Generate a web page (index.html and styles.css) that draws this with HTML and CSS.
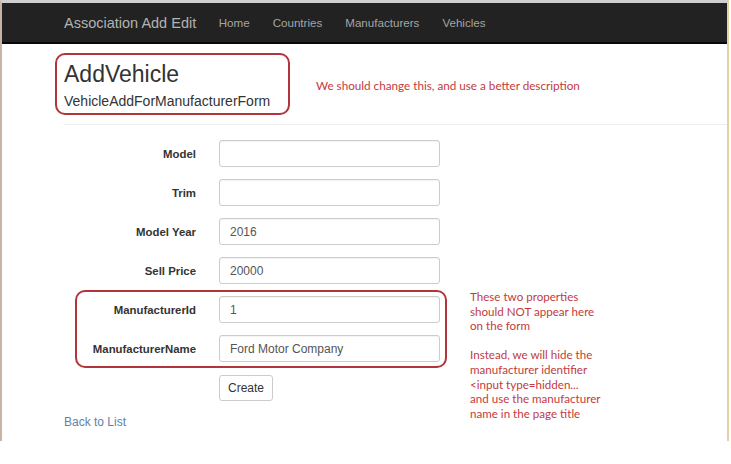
FILE: index.html
```html
<!DOCTYPE html>
<html>
<head>
<meta charset="utf-8">
<link rel="stylesheet" href="styles.css">
</head>
<body>
<div class="frame">
  <nav class="navbar">
    <span class="brand">Association Add Edit</span>
    <a class="nav-link">Home</a>
    <a class="nav-link">Countries</a>
    <a class="nav-link">Manufacturers</a>
    <a class="nav-link">Vehicles</a>
  </nav>
  <div class="container">
    <div class="header-row">
      <div class="title-box">
        <h2 class="title">AddVehicle</h2>
        <div class="subtitle">VehicleAddForManufacturerForm</div>
      </div>
      <p class="note note-top">We should change this, and use a better description</p>
    </div>
    <hr class="rule">
    <div class="form-row-wrap">
      <div class="main-col">
        <form class="form">
          <div class="row"><label class="label">Model</label><input class="input" type="text" value=""></div>
          <div class="row"><label class="label">Trim</label><input class="input" type="text" value=""></div>
          <div class="row"><label class="label">Model Year</label><input class="input" type="text" value="2016"></div>
          <div class="row"><label class="label">Sell Price</label><input class="input" type="text" value="20000"></div>
          <div class="group">
            <div class="row"><label class="label">ManufacturerId</label><input class="input" type="text" value="1"></div>
            <div class="row"><label class="label">ManufacturerName</label><input class="input" type="text" value="Ford Motor Company"></div>
          </div>
          <div class="row actions"><span class="label"></span><button class="btn" type="button">Create</button></div>
        </form>
        <a class="back">Back to List</a>
      </div>
      <div class="note note-side">
        <p>These two properties<br>should NOT appear here<br>on the form</p>
        <p>Instead, we will hide the<br>manufacturer identifier<br>&lt;input type=hidden...<br>and use the manufacturer<br>name in the page title</p>
      </div>
    </div>
  </div>
</div>
</body>
</html>
```
FILE: styles.css
```css
* { box-sizing: border-box; }
html, body { margin: 0; padding: 0; background: #fff; }
body {
  font-family: "Liberation Sans", Arial, sans-serif;
  color: #333;
  width: 731px;
  height: 464px;
  overflow: hidden;
}
.frame {
  width: 729px;
  height: 441px;
  border-top: 3px solid #cfcfcf;
  border-left: 2px solid #c9b2a6;
  border-right: 2px solid #e6cfa6;
}
.navbar {
  height: 41px;
  background: #222;
  border-bottom: 2px solid #080808;
  display: flex;
  align-items: center;
  padding-left: 62px;
}
.brand {
  font-size: 14.5px;
  color: #b3b3b3;
  margin-right: 11px;
}
.nav-link {
  font-size: 11.6px;
  color: #a5a5a5;
  padding: 0 11.5px;
}
.container {
  padding-left: 62px;
}
.header-row {
  display: flex;
  align-items: center;
  margin-top: 9px;
  margin-left: -9px;
}
.title-box {
  width: 235px;
  height: 62px;
  border: 2px solid #b3353b;
  border-radius: 10px;
  padding: 6px 0 0 7px;
}
.title {
  margin: 0;
  font-size: 23px;
  font-weight: normal;
  line-height: 26px;
  color: #333;
}
.subtitle {
  font-size: 14px;
  line-height: 18px;
  margin-top: 5px;
  color: #333;
}
.note {
  font-family: Lato, "Open Sans", sans-serif;
  color: #c43a3d;
  font-size: 11.7px;
}
.note-top {
  margin: 0 0 0 26px;
  padding-top: 1px;
}
.rule {
  margin: 9px 0 0 0;
  border: 0;
  border-top: 1px solid #eee;
}
.form-row-wrap {
  display: flex;
  align-items: flex-start;
  margin-top: 15px;
}
.main-col {
  width: 385px;
}
.row {
  display: flex;
  align-items: center;
  height: 27px;
  margin-bottom: 12px;
}
.label {
  width: 132px;
  text-align: right;
  font-size: 11.4px;
  font-weight: bold;
  color: #333;
  margin-right: 23px;
  flex: none;
}
.input {
  width: 221px;
  height: 27px;
  border: 1px solid #ccc;
  border-radius: 3px;
  padding: 0 10px;
  font-family: "Liberation Sans", Arial, sans-serif;
  font-size: 12px;
  color: #555;
  box-shadow: inset 0 1px 1px rgba(0,0,0,0.05);
}
.group {
  margin: -6px 0 0 11px;
  width: 372px;
  border: 2px solid #b3353b;
  border-radius: 10px;
  padding: 4px 0 0 0;
}
.group .label { width: 119px; }
.group .row:last-child { margin-bottom: 4px; }
.actions { margin-top: 7px; height: 26px; }
.btn {
  height: 26px;
  width: 54px;
  background: #fff;
  border: 1px solid #ccc;
  border-radius: 3px;
  font-family: "Liberation Sans", Arial, sans-serif;
  font-size: 12px;
  color: #333;
  padding: 0;
}
.note-side {
  margin: 150px 0 0 21px;
  line-height: 14.6px;
  font-size: 11.6px;
}
.note-side p { margin: 0 0 14.6px 0; }
.back {
  display: block;
  margin-top: 14px;
  font-size: 12px;
  color: #5d82a8;
}
```
